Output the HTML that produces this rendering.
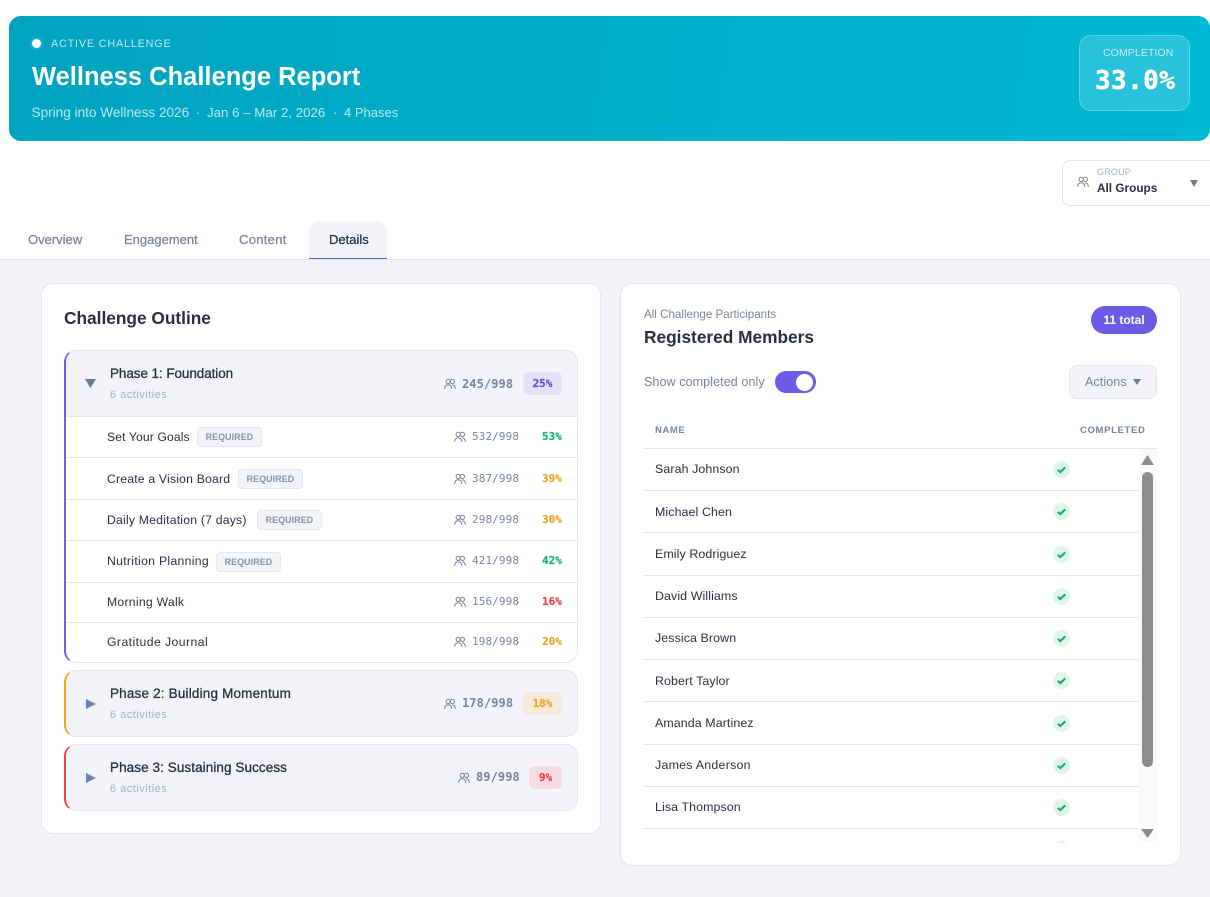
<!DOCTYPE html>
<html lang="en"><head><meta charset="utf-8"><title>Wellness Challenge Report</title>
<style>
*{box-sizing:border-box;margin:0;padding:0}
html,body{width:1210px;height:897px;overflow:hidden;background:#fff}
body{position:relative;font-family:"Liberation Sans",sans-serif;color:#2b2d42}
.a{position:absolute}
.t{position:absolute;white-space:nowrap;line-height:20px;height:20px}
.m{font-family:"DejaVu Sans Mono","Liberation Mono",monospace}
.hl{position:absolute;height:1px;background:#e4e6ef}
.ph{position:absolute;left:64px;width:514px;background:#f3f4f9;border:1px solid #e4e6ef;border-radius:12px}
.pt{font-size:13.5px;left:110px;color:#2b2d42;-webkit-text-stroke:.3px #2b2d42}
.ac{font-size:11px;left:110px;color:#a9b0c2;letter-spacing:.5px}
.rn{font-size:12.2px;left:107px;color:#2b2d42}
.req{position:absolute;height:20px;background:#f3f4f9;border:1px solid #e4e6ef;border-radius:4px;font-size:8.8px;font-weight:bold;letter-spacing:.15px;color:#8a8fa5;line-height:18px;text-align:center}
.rs{font-size:11px;left:472px;color:#7a82a0;letter-spacing:.1px}
.rp{font-size:11px;font-weight:bold;left:542px;-webkit-text-stroke:.2px currentColor}
.ps{font-size:12px;font-weight:bold;color:#7a82a0;letter-spacing:.08px}
.bd{position:absolute;height:23px;border-radius:6px;font-size:11px;font-weight:bold;text-align:center;line-height:23px;-webkit-text-stroke:.2px currentColor}
.nm{font-size:12.4px;left:655px;color:#2b2d42;letter-spacing:.1px}
.ck{position:absolute;left:1053px;width:17px;height:17px}
.ic{position:absolute;width:12px;height:12px}
.tb{font-size:13px;color:#7a7f9a;-webkit-text-stroke:.25px #7a7f9a}
.g{color:#16b070}.o{color:#eba52a}.r{color:#e8434a}
</style></head><body>
<svg width="0" height="0" style="position:absolute"><defs>
<symbol id="p" viewBox="0 0 12 12"><g fill="none" stroke="#7a7f9a" stroke-width="1"><circle cx="4.2" cy="3.4" r="2.1"/><circle cx="8.4" cy="3.4" r="2.1"/><path d="M.6 10.8C.8 8 2.3 6.8 4.2 6.8S7.6 8 7.8 10.8"/><path d="M8.2 6.9c1.8 0 3 1.2 3.2 3.9"/></g></symbol>
<symbol id="c" viewBox="0 0 17 17"><circle cx="8.5" cy="8.5" r="8.5" fill="#dff5ea"/><path d="M4.8 8.8l2.5 2.3L12.2 6.4" fill="none" stroke="#10a866" stroke-width="2"/></symbol>
</defs></svg>

<!-- Page background -->
<div class="a" style="left:0;top:260px;width:1210px;height:637px;background:#f3f4f9"></div>
<div class="a" style="left:0;top:259px;width:1210px;height:1px;background:#e4e6ef"></div>

<!-- Header -->
<div class="a" style="left:9px;top:16px;width:1201px;height:125px;border-radius:12px;background:linear-gradient(100deg,#00a3bf 0%,#00b8d4 100%)"></div>
<div class="a" style="left:32px;top:39px;width:9px;height:9px;border-radius:50%;background:#fff;box-shadow:0 0 4px rgba(255,255,255,.5)"></div>
<div class="t" style="left:51px;top:34px;font-size:10.8px;letter-spacing:.82px;color:rgba(255,255,255,.78)">ACTIVE CHALLENGE</div>
<div class="t" style="left:32px;top:67px;font-size:25.5px;font-weight:bold;color:#fff">Wellness Challenge Report</div>
<div class="t" style="left:31.5px;top:103px;font-size:13.6px;color:rgba(255,255,255,.75)">Spring into Wellness 2026</div>
<div class="t" style="left:195.5px;top:103px;font-size:13.4px;color:rgba(255,255,255,.75)">·</div>
<div class="t" style="left:207px;top:103px;font-size:13.3px;color:rgba(255,255,255,.75)">Jan 6 – Mar 2, 2026</div>
<div class="t" style="left:333px;top:103px;font-size:13.4px;color:rgba(255,255,255,.75)">·</div>
<div class="t" style="left:344px;top:103px;font-size:13px;color:rgba(255,255,255,.75)">4 Phases</div>
<div class="a" style="left:1079px;top:35px;width:111px;height:76px;border-radius:12px;background:rgba(255,255,255,.16);border:1px solid rgba(255,255,255,.25)"></div>
<div class="t" style="left:1103px;top:43px;font-size:10.5px;letter-spacing:.1px;color:rgba(255,255,255,.72)">COMPLETION</div>
<div class="t m" style="left:1095px;top:71px;font-size:26px;font-weight:bold;color:#fff;letter-spacing:.4px;-webkit-text-stroke:.5px #fff">33.0%</div>

<!-- Group select -->
<div class="a" style="left:1062px;top:160px;width:160px;height:46px;border-radius:8px;background:#fff;border:1px solid #e2e4ee"></div>
<svg class="ic" style="left:1077px;top:176px"><use href="#p"/></svg>
<div class="t" style="left:1097px;top:162px;font-size:9px;letter-spacing:.2px;color:#a9b0c2">GROUP</div>
<div class="t" style="left:1097px;top:178px;font-size:11.8px;font-weight:bold;color:#2b2d42">All Groups</div>
<svg class="a" style="left:1190px;top:180px" width="8" height="7"><path d="M0 0h8L4 7z" fill="#6b7a99"/></svg>

<!-- Tabs -->
<div class="a" style="left:309px;top:221px;width:78px;height:38px;background:#f3f4f9;border-radius:10px 10px 0 0;border-bottom:1px solid #6c5ce7"></div>
<div class="t tb" style="left:28px;top:230px">Overview</div>
<div class="t tb" style="left:124px;top:230px">Engagement</div>
<div class="t tb" style="left:239px;top:230px;letter-spacing:.3px">Content</div>
<div class="t tb" style="left:329px;top:230px;color:#2b2d42;-webkit-text-stroke:.25px #2b2d42">Details</div>

<!-- Left card -->
<div class="a" style="left:41px;top:283px;width:560px;height:551px;background:#fff;border:1px solid #e4e6ef;border-radius:12px"></div>
<div class="t" style="left:64px;top:308px;font-size:17.3px;font-weight:bold;color:#2b2d42">Challenge Outline</div>

<!-- Phase 1 -->
<div class="a" style="left:64px;top:350px;width:514px;height:313px;background:#fff;border:1px solid #e4e6ef;border-left:2px solid #6c5ce7;border-radius:12px;overflow:hidden"><div style="height:66px;background:#f3f4f9;border-bottom:1px solid #e4e6ef"></div></div>
<svg class="a" style="left:85px;top:379px" width="11" height="9"><path d="M0 0h11L5.5 9z" fill="#6b7a99"/></svg>
<div class="t pt" style="top:364px;letter-spacing:-.08px">Phase 1: Foundation</div>
<div class="t ac" style="top:385px">6 activities</div>
<svg class="ic" style="left:444px;top:378px"><use href="#p"/></svg>
<div class="t ps m" style="left:462px;top:374px">245/998</div>
<div class="bd m" style="left:523px;top:372px;width:39px;background:#e4e1f9;color:#5b4bd6">25%</div>

<div class="t rn" style="top:427px;letter-spacing:.1px">Set Your Goals</div><div class="req" style="left:197px;top:427px;width:65px">REQUIRED</div>
<svg class="ic" style="left:454px;top:431px"><use href="#p"/></svg><div class="t rs m" style="top:427px">532/998</div><div class="t rp m g" style="top:427px">53%</div>
<div class="hl" style="left:66px;top:457px;width:511px"></div>
<div class="t rn" style="top:469px;letter-spacing:.2px">Create a Vision Board</div><div class="req" style="left:238px;top:469px;width:65px">REQUIRED</div>
<svg class="ic" style="left:454px;top:473px"><use href="#p"/></svg><div class="t rs m" style="top:469px">387/998</div><div class="t rp m o" style="top:469px">39%</div>
<div class="hl" style="left:66px;top:499px;width:511px"></div>
<div class="t rn" style="top:510px;letter-spacing:.22px">Daily Meditation (7 days)</div><div class="req" style="left:257px;top:510px;width:65px">REQUIRED</div>
<svg class="ic" style="left:454px;top:514px"><use href="#p"/></svg><div class="t rs m" style="top:510px">298/998</div><div class="t rp m o" style="top:510px">30%</div>
<div class="hl" style="left:66px;top:540px;width:511px"></div>
<div class="t rn" style="top:551px;letter-spacing:.32px">Nutrition Planning</div><div class="req" style="left:216px;top:552px;width:65px">REQUIRED</div>
<svg class="ic" style="left:454px;top:555px"><use href="#p"/></svg><div class="t rs m" style="top:551px">421/998</div><div class="t rp m g" style="top:551px">42%</div>
<div class="hl" style="left:66px;top:582px;width:511px"></div>
<div class="t rn" style="top:592px;letter-spacing:.27px">Morning Walk</div>
<svg class="ic" style="left:454px;top:596px"><use href="#p"/></svg><div class="t rs m" style="top:592px">156/998</div><div class="t rp m r" style="top:592px">16%</div>
<div class="hl" style="left:66px;top:622px;width:511px"></div>
<div class="t rn" style="top:632px;letter-spacing:.45px">Gratitude Journal</div>
<svg class="ic" style="left:454px;top:636px"><use href="#p"/></svg><div class="t rs m" style="top:632px">198/998</div><div class="t rp m o" style="top:632px">20%</div>

<!-- Phase 2 -->
<div class="ph" style="top:670px;height:67px;border-left:2px solid #e9a820"></div>
<svg class="a" style="left:86px;top:699px" width="10" height="10"><path d="M0 0l10 5-10 5z" fill="#6b85ab"/></svg>
<div class="t pt" style="top:684px;letter-spacing:.18px">Phase 2: Building Momentum</div>
<div class="t ac" style="top:705px">6 activities</div>
<svg class="ic" style="left:444px;top:698px"><use href="#p"/></svg>
<div class="t ps m" style="left:462px;top:693px">178/998</div>
<div class="bd m o" style="left:523px;top:692px;width:39px;background:#f5ead9">18%</div>

<!-- Phase 3 -->
<div class="ph" style="top:744px;height:67px;border-left:2px solid #e8434a"></div>
<svg class="a" style="left:86px;top:773px" width="10" height="10"><path d="M0 0l10 5-10 5z" fill="#6b85ab"/></svg>
<div class="t pt" style="top:758px;letter-spacing:.08px">Phase 3: Sustaining Success</div>
<div class="t ac" style="top:779px">6 activities</div>
<svg class="ic" style="left:458px;top:772px"><use href="#p"/></svg>
<div class="t ps m" style="left:476px;top:767px">89/998</div>
<div class="bd m r" style="left:529px;top:766px;width:33px;background:#f6dbe1">9%</div>

<!-- Right card -->
<div class="a" style="left:620px;top:283px;width:561px;height:583px;background:#fff;border:1px solid #e4e6ef;border-radius:12px"></div>
<div class="t" style="left:644px;top:305px;font-size:11.6px;color:#7a7f9a">All Challenge Participants</div>
<div class="t" style="left:644px;top:327px;font-size:17.3px;font-weight:bold;color:#2b2d42">Registered Members</div>
<div class="a" style="left:1091px;top:306px;width:66px;height:28px;border-radius:14px;background:#6c5ce7;color:#fff;font-size:12px;font-weight:bold;text-align:center;line-height:28px">11 total</div>
<div class="t" style="left:644px;top:372px;font-size:12.5px;color:#7a7f9a;letter-spacing:.1px">Show completed only</div>
<div class="a" style="left:775px;top:371px;width:41px;height:22px;border-radius:11px;background:#6c5ce7"></div>
<div class="a" style="left:796px;top:373.5px;width:17px;height:17px;border-radius:50%;background:#fff"></div>
<div class="a" style="left:1069px;top:365px;width:88px;height:34px;border-radius:8px;background:#f3f4f9;border:1px solid #e4e6ef"></div>
<div class="t" style="left:1085px;top:372px;font-size:12.5px;color:#7a7f9a;letter-spacing:.1px">Actions</div>
<svg class="a" style="left:1133px;top:379px" width="8" height="6"><path d="M0 0h8L4 6z" fill="#6b7a99"/></svg>

<div class="t" style="left:655px;top:421px;font-size:9.5px;font-weight:bold;letter-spacing:.6px;color:#7a7f9a">NAME</div>
<div class="t" style="left:1080px;top:421px;font-size:9.5px;font-weight:bold;letter-spacing:.65px;color:#7a7f9a">COMPLETED</div>
<div class="hl" style="left:643px;top:448px;width:514px"></div>

<div class="t nm" style="top:459px">Sarah Johnson</div><svg class="ck" style="top:461px"><use href="#c"/></svg><div class="hl" style="left:643px;top:490px;width:496px"></div>
<div class="t nm" style="top:501.5px">Michael Chen</div><svg class="ck" style="top:503px"><use href="#c"/></svg><div class="hl" style="left:643px;top:532px;width:496px"></div>
<div class="t nm" style="top:544px">Emily Rodriguez</div><svg class="ck" style="top:546px"><use href="#c"/></svg><div class="hl" style="left:643px;top:575px;width:496px"></div>
<div class="t nm" style="top:586px">David Williams</div><svg class="ck" style="top:588px"><use href="#c"/></svg><div class="hl" style="left:643px;top:617px;width:496px"></div>
<div class="t nm" style="top:628px">Jessica Brown</div><svg class="ck" style="top:630px"><use href="#c"/></svg><div class="hl" style="left:643px;top:659px;width:496px"></div>
<div class="t nm" style="top:671px">Robert Taylor</div><svg class="ck" style="top:672px"><use href="#c"/></svg><div class="hl" style="left:643px;top:701px;width:496px"></div>
<div class="t nm" style="top:713px">Amanda Martinez</div><svg class="ck" style="top:715px"><use href="#c"/></svg><div class="hl" style="left:643px;top:744px;width:496px"></div>
<div class="t nm" style="top:755px;letter-spacing:.25px">James Anderson</div><svg class="ck" style="top:757px"><use href="#c"/></svg><div class="hl" style="left:643px;top:786px;width:496px"></div>
<div class="t nm" style="top:797px">Lisa Thompson</div><svg class="ck" style="top:799px"><use href="#c"/></svg><div class="hl" style="left:643px;top:828px;width:496px"></div>
<div class="a" style="left:1053px;top:841px;width:17px;height:2px;overflow:hidden"><svg width="17" height="17" style="display:block"><use href="#c"/></svg></div>

<!-- Scrollbar -->
<div class="a" style="left:1139px;top:449px;width:18px;height:393px;background:#fafafa"></div>
<svg class="a" style="left:1141px;top:455px" width="13" height="10"><path d="M0 10L6.5 0 13 10z" fill="#8c8c8c"/></svg>
<div class="a" style="left:1142px;top:472px;width:11px;height:295px;border-radius:6px;background:#8c8c8c"></div>
<svg class="a" style="left:1141px;top:829px" width="13" height="9"><path d="M0 0h13L6.5 9z" fill="#8c8c8c"/></svg>
</body></html>
